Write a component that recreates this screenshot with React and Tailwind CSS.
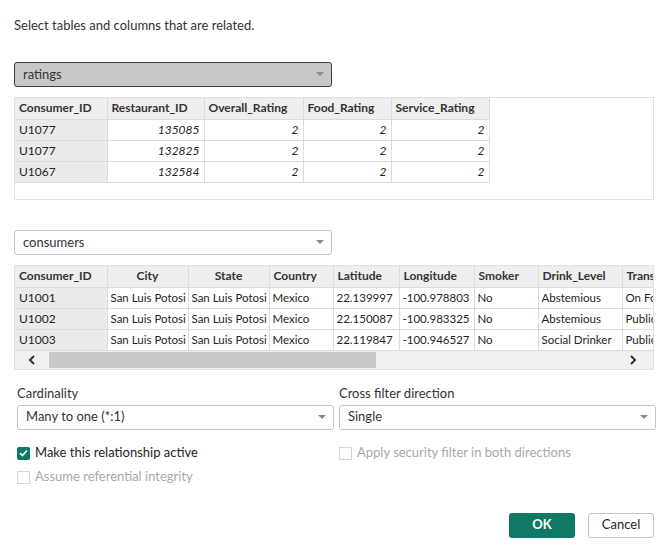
import React from "react";

const ratingCols = [
  { key: "Consumer_ID", w: 92 },
  { key: "Restaurant_ID", w: 97 },
  { key: "Overall_Rating", w: 99 },
  { key: "Food_Rating", w: 88 },
  { key: "Service_Rating", w: 98 },
];

const ratingRows = [
  ["U1077", "135085", "2", "2", "2"],
  ["U1077", "132825", "2", "2", "2"],
  ["U1067", "132584", "2", "2", "2"],
];

const consumerCols = [
  { key: "Consumer_ID", w: 92, center: false },
  { key: "City", w: 81, center: true },
  { key: "State", w: 81, center: true },
  { key: "Country", w: 64, center: false },
  { key: "Latitude", w: 66, center: false },
  { key: "Longitude", w: 75, center: false },
  { key: "Smoker", w: 64, center: false },
  { key: "Drink_Level", w: 84, center: false },
  { key: "Transport", w: 90, center: false },
];

const consumerRows = [
  ["U1001", "San Luis Potosi", "San Luis Potosi", "Mexico", "22.139997", "-100.978803", "No", "Abstemious", "On Foot"],
  ["U1002", "San Luis Potosi", "San Luis Potosi", "Mexico", "22.150087", "-100.983325", "No", "Abstemious", "Public"],
  ["U1003", "San Luis Potosi", "San Luis Potosi", "Mexico", "22.119847", "-100.946527", "No", "Social Drinker", "Public"],
];

const Caret = () => (
  <svg width="8" height="5" viewBox="0 0 8 5" className="shrink-0">
    <path d="M0 0 L8 0 L4 4 Z" fill="#8a8a8a" />
  </svg>
);

const Dropdown = ({ value, active, className = "" }) => (
  <div
    className={
      "flex h-[25px] items-center justify-between rounded-[3px] border pl-[8px] pr-[7px] text-[13px] " +
      (active
        ? "border-[#3b3b3b] bg-[#c8c8c8] text-[#333]"
        : "border-[#c4c4c4] bg-white text-[#333]") +
      " " +
      className
    }
  >
    <span>{value}</span>
    <Caret />
  </div>
);

const Check = ({ checked, disabled, label }) => (
  <div className="flex h-[19px] items-center gap-[5px] text-[13px]">
    {checked ? (
      <div className="flex h-[13px] w-[13px] items-center justify-center rounded-[2px] bg-[#117865]">
        <svg width="9" height="8" viewBox="0 0 9 8">
          <path d="M1 4.2 L3.5 6.5 L8 1.5" fill="none" stroke="white" strokeWidth="1.6" />
        </svg>
      </div>
    ) : (
      <div className="h-[13px] w-[13px] border border-[#d6d6d6] bg-white" />
    )}
    <span className={disabled ? "text-[#a8a8a8]" : "text-[#252423]"}>{label}</span>
  </div>
);

export default function App() {
  return (
    <div
      className="h-[544px] w-[671px] overflow-hidden bg-white text-[#252423]"
      style={{ fontFamily: "Lato, 'Open Sans', sans-serif" }}
    >
      <div className="pl-[14px] pt-[16px]">
        <p className="text-[13px] leading-[18px] text-[#333]">Select tables and columns that are related.</p>

        <Dropdown value="ratings" active className="mt-[28px] w-[318px]" />

        <div className="mt-[10px] h-[103px] w-[640px] border border-[#e1e1e1] bg-white">
          <table className="table-fixed border-collapse text-[12px]">
            <colgroup>
              {ratingCols.map((c) => (
                <col key={c.key} style={{ width: c.w }} />
              ))}
            </colgroup>
            <thead>
              <tr className="h-[21px] bg-[#efefef]">
                {ratingCols.map((c) => (
                  <th key={c.key} className="border-b border-r border-[#dcdcdc] px-[4px] text-left font-bold text-[#333]">
                    {c.key}
                  </th>
                ))}
              </tr>
            </thead>
            <tbody>
              {ratingRows.map((r, i) => (
                <tr key={i} className="h-[21px]">
                  {r.map((v, j) => (
                    <td
                      key={j}
                      className={
                        "border-b border-r border-[#dcdcdc] px-[4px] " +
                        (j === 0 ? "bg-[#ebebeb] text-left" : "bg-white text-right italic")
                      }
                    >
                      {v}
                    </td>
                  ))}
                </tr>
              ))}
            </tbody>
          </table>
        </div>

        <Dropdown value="consumers" className="mt-[30px] w-[318px]" />

        <div className="mt-[10px] w-[640px] overflow-hidden border border-[#e1e1e1]">
          <table className="w-[697px] table-fixed border-collapse text-[11.5px]">
            <colgroup>
              {consumerCols.map((c) => (
                <col key={c.key} style={{ width: c.w }} />
              ))}
            </colgroup>
            <thead>
              <tr className="h-[21px] bg-[#efefef]">
                {consumerCols.map((c) => (
                  <th
                    key={c.key}
                    className={
                      "overflow-hidden whitespace-nowrap border-b border-r border-[#dcdcdc] px-[4px] text-[12px] font-bold text-[#333] " +
                      (c.center ? "text-center" : "text-left")
                    }
                  >
                    {c.key}
                  </th>
                ))}
              </tr>
            </thead>
            <tbody>
              {consumerRows.map((r, i) => (
                <tr key={i} className="h-[21px]">
                  {r.map((v, j) => (
                    <td
                      key={j}
                      className={
                        "overflow-hidden whitespace-nowrap border-b border-r border-[#dcdcdc] " +
                        (j === 0 ? "bg-[#ebebeb] px-[4px] text-[12px]" : "bg-white px-[3px]")
                      }
                    >
                      {v}
                    </td>
                  ))}
                </tr>
              ))}
            </tbody>
          </table>
          <div className="flex h-[18px] items-center bg-[#f0f0f0]">
            <div className="flex w-[34px] justify-center">
              <svg width="10" height="10" viewBox="0 0 10 10">
                <path d="M7 1 L3 5 L7 9" fill="none" stroke="#333" strokeWidth="2" />
              </svg>
            </div>
            <div className="h-[16px] w-[327px] bg-[#c9c9c9]" />
            <div className="flex-1" />
            <div className="flex w-[40px] justify-center">
              <svg width="10" height="10" viewBox="0 0 10 10">
                <path d="M3 1 L7 5 L3 9" fill="none" stroke="#333" strokeWidth="2" />
              </svg>
            </div>
          </div>
        </div>

        <div className="mt-[14px] grid w-[642px] grid-cols-2 gap-[5px] pl-[3px]">
          <div>
            <div className="text-[13px] leading-[18px] text-[#333]">Cardinality</div>
            <Dropdown value="Many to one (*:1)" className="mt-[3px]" />
            <div className="mt-[14px] flex flex-col gap-[5px]">
              <Check checked label="Make this relationship active" />
              <Check disabled label="Assume referential integrity" />
            </div>
          </div>
          <div>
            <div className="text-[13px] leading-[18px] text-[#333]">Cross filter direction</div>
            <Dropdown value="Single" className="mt-[3px]" />
            <div className="mt-[14px]">
              <Check disabled label="Apply security filter in both directions" />
            </div>
          </div>
        </div>

        <div className="mt-[26px] flex w-[640px] justify-end gap-[13px]">
          <button className="h-[25px] w-[66px] rounded-[3px] bg-[#117865] text-[13px] font-bold text-white">OK</button>
          <button className="h-[25px] w-[66px] rounded-[3px] border border-[#c4c4c4] bg-white text-[13px] text-[#252423]">
            Cancel
          </button>
        </div>
      </div>
    </div>
  );
}
